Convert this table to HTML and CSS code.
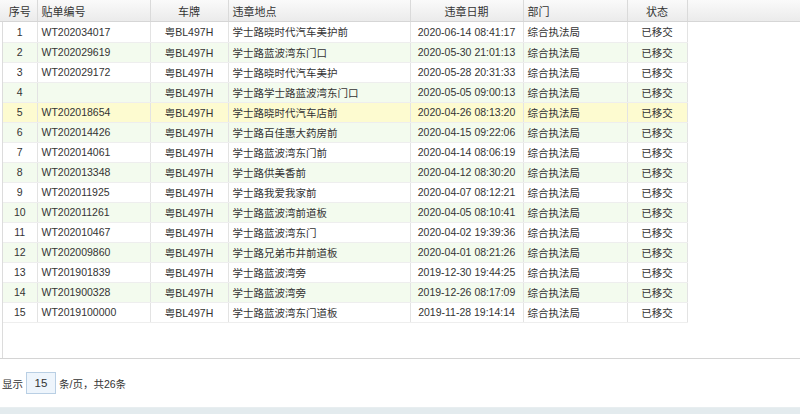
FILE: index.html
```html
<!DOCTYPE html>
<html lang="zh-CN">
<head>
<meta charset="utf-8">
<title>违章列表</title>
<link rel="stylesheet" href="styles.css">
</head>
<body>
<div class="page">
  <div class="grid">
    <div class="grid-head">
      <table class="tbl">
        <colgroup><col class="c1"><col class="c2"><col class="c3"><col class="c4"><col class="c5"><col class="c6"><col class="c7"></colgroup>
        <tr>
          <th class="ctr">序号</th><th>贴单编号</th><th class="ctr">车牌</th><th>违章地点</th><th class="ctr">违章日期</th><th>部门</th><th class="ctr">状态</th>
        </tr>
      </table>
    </div>
    <div class="grid-body">
      <table class="tbl">
        <colgroup><col class="c1"><col class="c2"><col class="c3"><col class="c4"><col class="c5"><col class="c6"><col class="c7"></colgroup>
        <tr><td class="ctr">1</td><td>WT202034017</td><td class="ctr">粤BL497H</td><td>学士路晓时代汽车美护前</td><td class="ctr">2020-06-14 08:41:17</td><td>综合执法局</td><td class="ctr">已移交</td></tr>
        <tr><td class="ctr">2</td><td>WT202029619</td><td class="ctr">粤BL497H</td><td>学士路蓝波湾东门口</td><td class="ctr">2020-05-30 21:01:13</td><td>综合执法局</td><td class="ctr">已移交</td></tr>
        <tr><td class="ctr">3</td><td>WT202029172</td><td class="ctr">粤BL497H</td><td>学士路晓时代汽车美护</td><td class="ctr">2020-05-28 20:31:33</td><td>综合执法局</td><td class="ctr">已移交</td></tr>
        <tr><td class="ctr">4</td><td></td><td class="ctr">粤BL497H</td><td>学士路学士路蓝波湾东门口</td><td class="ctr">2020-05-05 09:00:13</td><td>综合执法局</td><td class="ctr">已移交</td></tr>
        <tr class="sel"><td class="ctr">5</td><td>WT202018654</td><td class="ctr">粤BL497H</td><td>学士路晓时代汽车店前</td><td class="ctr">2020-04-26 08:13:20</td><td>综合执法局</td><td class="ctr">已移交</td></tr>
        <tr><td class="ctr">6</td><td>WT202014426</td><td class="ctr">粤BL497H</td><td>学士路百佳惠大药房前</td><td class="ctr">2020-04-15 09:22:06</td><td>综合执法局</td><td class="ctr">已移交</td></tr>
        <tr><td class="ctr">7</td><td>WT202014061</td><td class="ctr">粤BL497H</td><td>学士路蓝波湾东门前</td><td class="ctr">2020-04-14 08:06:19</td><td>综合执法局</td><td class="ctr">已移交</td></tr>
        <tr><td class="ctr">8</td><td>WT202013348</td><td class="ctr">粤BL497H</td><td>学士路供美香前</td><td class="ctr">2020-04-12 08:30:20</td><td>综合执法局</td><td class="ctr">已移交</td></tr>
        <tr><td class="ctr">9</td><td>WT202011925</td><td class="ctr">粤BL497H</td><td>学士路我爱我家前</td><td class="ctr">2020-04-07 08:12:21</td><td>综合执法局</td><td class="ctr">已移交</td></tr>
        <tr><td class="ctr">10</td><td>WT202011261</td><td class="ctr">粤BL497H</td><td>学士路蓝波湾前道板</td><td class="ctr">2020-04-05 08:10:41</td><td>综合执法局</td><td class="ctr">已移交</td></tr>
        <tr><td class="ctr">11</td><td>WT202010467</td><td class="ctr">粤BL497H</td><td>学士路蓝波湾东门</td><td class="ctr">2020-04-02 19:39:36</td><td>综合执法局</td><td class="ctr">已移交</td></tr>
        <tr><td class="ctr">12</td><td>WT202009860</td><td class="ctr">粤BL497H</td><td>学士路兄弟市井前道板</td><td class="ctr">2020-04-01 08:21:26</td><td>综合执法局</td><td class="ctr">已移交</td></tr>
        <tr><td class="ctr">13</td><td>WT201901839</td><td class="ctr">粤BL497H</td><td>学士路蓝波湾旁</td><td class="ctr">2019-12-30 19:44:25</td><td>综合执法局</td><td class="ctr">已移交</td></tr>
        <tr><td class="ctr">14</td><td>WT201900328</td><td class="ctr">粤BL497H</td><td>学士路蓝波湾旁</td><td class="ctr">2019-12-26 08:17:09</td><td>综合执法局</td><td class="ctr">已移交</td></tr>
        <tr><td class="ctr">15</td><td>WT2019100000</td><td class="ctr">粤BL497H</td><td>学士路蓝波湾东门道板</td><td class="ctr">2019-11-28 19:14:14</td><td>综合执法局</td><td class="ctr">已移交</td></tr>
      </table>
    </div>
  </div>
  <div class="pager">
    <span>显示</span>
    <span class="size-box">15</span>
    <span>条/页，共26条</span>
  </div>
  <div class="foot"></div>
</div>
</body>
</html>
```
FILE: styles.css
```css
* { box-sizing: border-box; }
html, body { margin: 0; padding: 0; background: #fff; }
body {
  font-family: "Liberation Sans", "Noto Sans CJK SC", sans-serif;
  font-size: 10.5px;
  color: #333;
}
.page {
  width: 800px;
  height: 414px;
  display: flex;
  flex-direction: column;
}
.grid {
  height: 359px;
  border-bottom: 1px solid #d4d4d4;
  display: flex;
  flex-direction: column;
}
.grid-head {
  height: 22px;
  background: linear-gradient(#fafafa, #ebebeb);
  border-bottom: 1px solid #d6d6d6;
  padding-left: 3px;
}
.grid-body {
  flex: 1;
  margin-left: 2px;
  border-left: 1px solid #dcdcdc;
}
.tbl {
  border-collapse: collapse;
  table-layout: fixed;
  width: 684px;
}
.c1 { width: 34px; }
.c2 { width: 113px; }
.c3 { width: 78px; }
.c4 { width: 182px; }
.c5 { width: 113px; }
.c6 { width: 104px; }
.c7 { width: 60px; }
.tbl th {
  height: 21px;
  font-size: 11px;
  font-weight: normal;
  text-align: left;
  padding: 0 4px;
  border-right: 1px solid #dadada;
  white-space: nowrap;
}
.tbl td {
  height: 20px;
  padding: 0 4px;
  border-right: 1px solid #e3e3e3;
  border-bottom: 1px solid #eeeeee;
  white-space: nowrap;
  overflow: hidden;
}
.tbl .ctr { text-align: center; }
.grid-body tr:nth-child(even) { background: #f3fbee; }
.grid-body tr.sel { background: #fdfbd0; }
.pager {
  height: 48px;
  display: flex;
  align-items: center;
  padding-left: 2px;
  gap: 3px;
}
.size-box {
  width: 30px;
  height: 22px;
  border: 1px solid #b9cfe4;
  background: #eef5fc;
  display: flex;
  align-items: center;
  justify-content: center;
  font-size: 11.5px;
}
.foot {
  flex: 1;
  border-top: 1px solid #e8eef0;
  background: #e3ebee;
}
```
